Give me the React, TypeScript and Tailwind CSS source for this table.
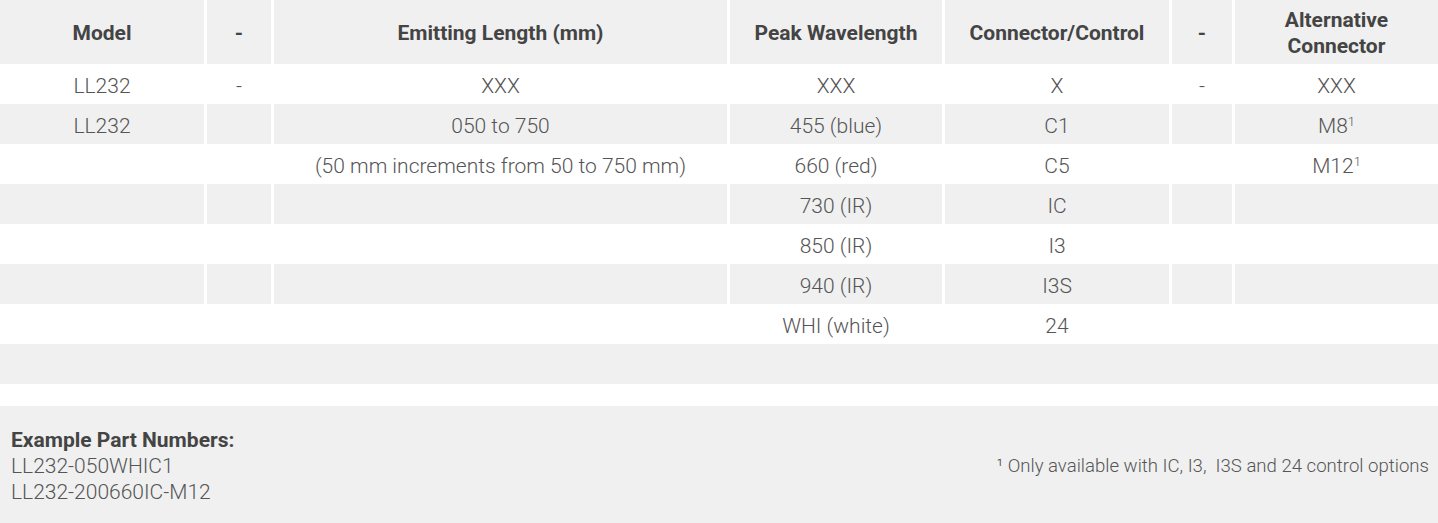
const cols = "grid grid-cols-[204px_64px_453px_212px_224px_60px_203px] gap-x-[3px]";

type Row = { cells: (string | JSX.Element)[]; gray: boolean };

const Sup = ({ base }: { base: string }) => (
  <span>
    {base}
    <span className="text-[13px] align-[7px]">1</span>
  </span>
);

const rows: Row[] = [
  { cells: ["LL232", "-", "XXX", "XXX", "X", "-", "XXX"], gray: false },
  { cells: ["LL232", "", "050 to 750", "455 (blue)", "C1", "", <Sup base="M8" />], gray: true },
  { cells: ["", "", "(50 mm increments from 50 to 750 mm)", "660 (red)", "C5", "", <Sup base="M12" />], gray: false },
  { cells: ["", "", "", "730 (IR)", "IC", "", ""], gray: true },
  { cells: ["", "", "", "850 (IR)", "I3", "", ""], gray: false },
  { cells: ["", "", "", "940 (IR)", "I3S", "", ""], gray: true },
  { cells: ["", "", "", "WHI (white)", "24", "", ""], gray: false },
];

const headers = ["Model", "-", "Emitting Length (mm)", "Peak Wavelength", "Connector/Control", "-", "Alternative Connector"];

export default function App() {
  return (
    <div className="w-[1438px] h-[523px] bg-white font-['Roboto',sans-serif] text-[21px] text-[#555]">
      {/* header */}
      <div className={cols}>
        {headers.map((h, i) => (
          <div
            key={i}
            className="h-[64px] bg-[#f0f0f0] flex items-center justify-center text-center font-bold text-[#444] leading-[26px] px-2 pt-[2px]"
          >
            {h}
          </div>
        ))}
      </div>

      {/* body rows */}
      {rows.map((r, ri) => (
        <div key={ri} className={cols}>
          {r.cells.map((c, ci) => (
            <div
              key={ci}
              className={`h-[40px] flex items-center justify-center font-light pt-[5px] ${r.gray ? "bg-[#f0f0f0]" : "bg-white"}`}
            >
              {c}
            </div>
          ))}
        </div>
      ))}

      {/* empty spanning row */}
      <div className="h-[40px] bg-[#f0f0f0]" />

      <div className="h-[22px]" />

      {/* footer */}
      <div className="h-[117px] bg-[#f0f0f0] flex items-center justify-between pl-[11px] pr-[9px] pt-[2px]">
        <div className="leading-[26px] font-light">
          <div className="font-bold text-[#444]">Example Part Numbers:</div>
          <div>LL232-050WHIC1</div>
          <div>LL232-200660IC-M12</div>
        </div>
        <div className="font-light text-[18.6px] whitespace-pre pt-[2px]">
          {"¹ Only available with IC, I3,  I3S and 24 control options"}
        </div>
      </div>
    </div>
  );
}
